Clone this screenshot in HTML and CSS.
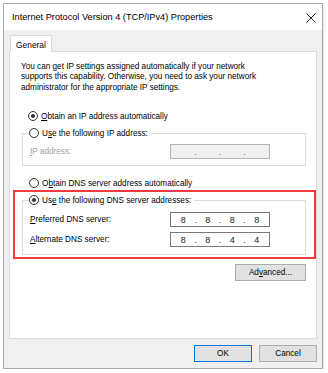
FILE: index.html
```html
<!DOCTYPE html>
<html>
<head>
<meta charset="utf-8">
<title>Internet Protocol Version 4 (TCP/IPv4) Properties</title>
<link rel="stylesheet" href="styles.css">
</head>
<body>
<div class="window">
  <div class="titlebar">
    <span class="title">Internet Protocol Version 4 (TCP/IPv4) Properties</span>
    <svg class="close" width="10" height="10" viewBox="0 0 10 10"><path d="M0.5 0.5 L9.5 9.5 M9.5 0.5 L0.5 9.5" stroke="#222" stroke-width="1" fill="none"/></svg>
  </div>
  <div class="frame">
    <div class="tabs"><div class="tab">General</div></div>
    <div class="panel">
      <p class="intro">You can get IP settings assigned automatically if your network<br>supports this capability. Otherwise, you need to ask your network<br>administrator for the appropriate IP settings.</p>

      <div class="option first"><span class="radio checked"></span><span class="label"><u>O</u>btain an IP address automatically</span></div>

      <div class="group g1">
        <div class="legend"><span class="radio"></span><span class="label">U<u>s</u>e the following IP address:</span></div>
        <div class="row disabled first-row"><span><u>I</u>P address:</span>
          <div class="ip empty"><span class="oct"></span><span class="dot">.</span><span class="oct"></span><span class="dot">.</span><span class="oct"></span><span class="dot">.</span><span class="oct"></span></div>
        </div>
      </div>

      <div class="option second"><span class="radio"></span><span class="label">O<u>b</u>tain DNS server address automatically</span></div>

      <div class="group g2">
        <div class="legend"><span class="radio checked"></span><span class="label">Us<u>e</u> the following DNS server addresses:</span></div>
        <div class="row first-row"><span><u>P</u>referred DNS server:</span>
          <div class="ip"><span class="oct">8</span><span class="dot">.</span><span class="oct">8</span><span class="dot">.</span><span class="oct">8</span><span class="dot">.</span><span class="oct">8</span></div>
        </div>
        <div class="row next-row"><span><u>A</u>lternate DNS server:</span>
          <div class="ip"><span class="oct">8</span><span class="dot">.</span><span class="oct">8</span><span class="dot">.</span><span class="oct">4</span><span class="dot">.</span><span class="oct">4</span></div>
        </div>
      </div>

      <div class="adv-row"><button class="btn adv">Ad<u>v</u>anced...</button></div>
    </div>
    <div class="footer">
      <button class="btn ok">OK</button>
      <button class="btn">Cancel</button>
    </div>
  </div>
  <div class="highlight"></div>
</div>
</body>
</html>
```
FILE: styles.css
```css
* { box-sizing: border-box; }
html, body { margin: 0; padding: 0; background: #fff; }
body {
  font-family: "Liberation Sans", Arial, sans-serif;
  font-size: 8.2px;
  color: #000;
}
u { text-decoration: underline; text-underline-offset: 1px; }

.window {
  position: relative;
  margin: 3px 0 0 3px;
  width: 320px;
  height: 366px;
  border: 1px solid #a8a8a8;
  background: #f0f0f0;
  display: flex;
  flex-direction: column;
  box-shadow: 1px 1px 2px rgba(0,0,0,0.12);
}

.titlebar {
  height: 26px;
  background: #fff;
  display: flex;
  align-items: center;
  justify-content: space-between;
  padding: 0 6px 0 8px;
}
.title { font-size: 9.2px; color: #000; }
.close { display: block; margin-top: 1px; }

.frame {
  flex: 1;
  display: flex;
  flex-direction: column;
  padding: 5px 5px 6px 5px;
}

.tabs { display: flex; height: 17px; position: relative; z-index: 1; }
.tab {
  margin-left: 1px;
  width: 42px;
  height: 17px;
  border: 1px solid #d9d9d9;
  border-bottom: none;
  background: #fff;
  display: flex;
  align-items: center;
  justify-content: center;
  padding-top: 1px;
  font-size: 8.4px;
}

.panel {
  flex: 1;
  margin-top: -1px;
  border: 1px solid #d9d9d9;
  background: #fff;
  padding: 10px 10px 0 12px;
  display: flex;
  flex-direction: column;
}

.intro { margin: 0 0 0 -1px; line-height: 10.4px; }

.option { display: flex; align-items: center; height: 12px; padding-left: 6px; }
.option.first { margin-top: 17px; }
.option.second { margin-top: 11px; padding-left: 7px; }
.label { margin-left: 3px; }

.radio {
  width: 10px;
  height: 10px;
  border: 1px solid #333;
  border-radius: 50%;
  background: #fff;
  display: flex;
  align-items: center;
  justify-content: center;
  flex: none;
}
.radio.checked::after {
  content: "";
  width: 4px;
  height: 4px;
  border-radius: 50%;
  background: #333;
}

.group {
  border: 1px solid #dcdcdc;
  margin-right: 0;
}
.g1 { margin-top: 11px; padding-bottom: 6px; }
.g2 { margin-top: 11px; padding-bottom: 7px; }
.legend {
  display: flex;
  align-items: center;
  width: fit-content;
  height: 12px;
  margin: -7px 0 0 6px;
  padding-right: 3px;
  background: #fff;
}

.row {
  display: flex;
  align-items: center;
  justify-content: space-between;
  padding: 0 35px 0 7px;
}
.first-row { margin-top: 5px; }
.g2 .first-row { margin-top: 6px; }
.next-row { margin-top: 5px; }
.disabled { color: #a0a0a0; }

.ip {
  width: 100px;
  height: 15px;
  border: 1px solid #7a7a7a;
  background: #fff;
  display: flex;
  align-items: center;
  font-size: 9px;
  color: #1a1a1a;
}
.ip.empty { background: #f0f0f0; border-color: #b4b4b4; color: #555; }
.oct { flex: 1; text-align: center; }
.dot { width: 0; display: flex; justify-content: center; }

.adv-row { display: flex; justify-content: flex-end; margin-top: 9px; }

.btn {
  font-family: inherit;
  font-size: 8.2px;
  color: #000;
  height: 17px;
  border: 1px solid #adadad;
  background: #e1e1e1;
  padding: 0;
  margin: 0;
  display: flex;
  align-items: center;
  justify-content: center;
}
.adv { width: 71px; }

.footer {
  display: flex;
  justify-content: flex-end;
  gap: 7px;
  margin-top: 6px;
}
.footer .btn { width: 58px; }
.btn.ok { border-color: #0078d7; }

.highlight {
  position: absolute;
  left: 9px;
  top: 186px;
  width: 303px;
  height: 69px;
  border: 2px solid #ef3b3f;
  pointer-events: none;
}
```
